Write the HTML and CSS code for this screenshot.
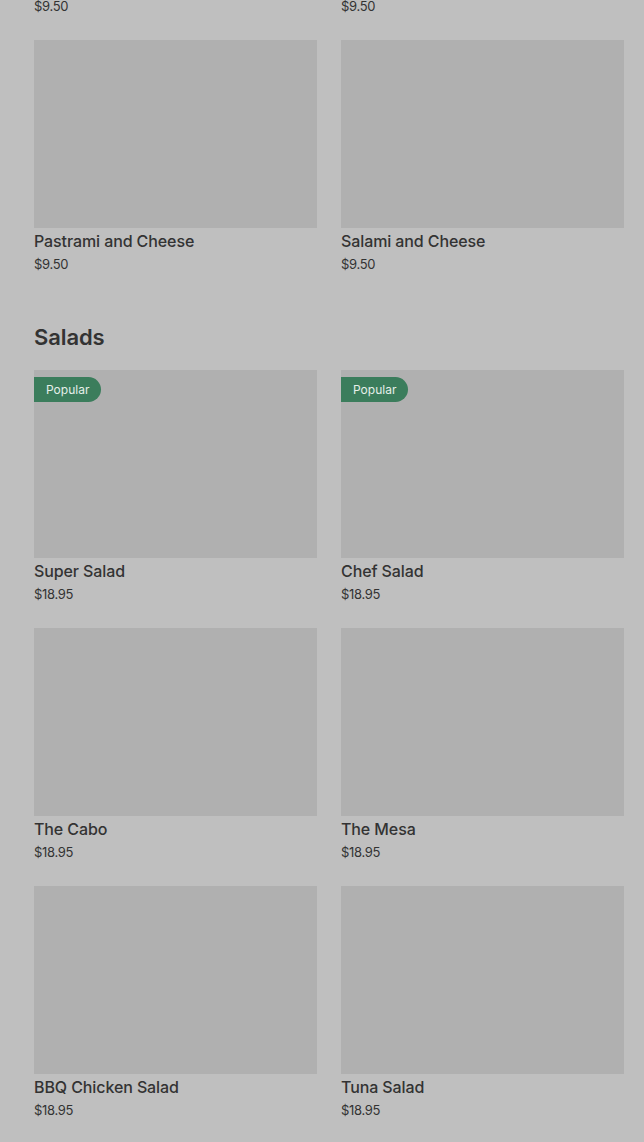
FILE: index.html
```html
<!DOCTYPE html>
<html lang="en">
<head>
  <meta charset="UTF-8" />
  <meta name="viewport" content="width=device-width, initial-scale=1.0"/>
  <title>Menu</title>
  <link rel="stylesheet" href="styles.css">
</head>
<body>
  <div class="menu">
    <!-- Sandwiches (tail of the section) -->
    <section class="section section-cut">
      <div class="grid">
        <div class="card">
          <div class="photo"></div>
          <div class="name">Ham and Cheese</div>
          <div class="price">$9.50</div>
        </div>
        <div class="card">
          <div class="photo"></div>
          <div class="name">Turkey and Cheese</div>
          <div class="price">$9.50</div>
        </div>
        <div class="card">
          <div class="photo"></div>
          <div class="name">Pastrami and Cheese</div>
          <div class="price">$9.50</div>
        </div>
        <div class="card">
          <div class="photo"></div>
          <div class="name">Salami and Cheese</div>
          <div class="price">$9.50</div>
        </div>
      </div>
    </section>

    <!-- Salads -->
    <section class="section">
      <h2 class="section-title">Salads</h2>
      <div class="grid">
        <div class="card">
          <div class="photo"><span class="badge">Popular</span></div>
          <div class="name">Super Salad</div>
          <div class="price">$18.95</div>
        </div>
        <div class="card">
          <div class="photo"><span class="badge">Popular</span></div>
          <div class="name">Chef Salad</div>
          <div class="price">$18.95</div>
        </div>
        <div class="card">
          <div class="photo"></div>
          <div class="name">The Cabo</div>
          <div class="price">$18.95</div>
        </div>
        <div class="card">
          <div class="photo"></div>
          <div class="name">The Mesa</div>
          <div class="price">$18.95</div>
        </div>
        <div class="card">
          <div class="photo"></div>
          <div class="name">BBQ Chicken Salad</div>
          <div class="price">$18.95</div>
        </div>
        <div class="card">
          <div class="photo"></div>
          <div class="name">Tuna Salad</div>
          <div class="price">$18.95</div>
        </div>
      </div>
    </section>
  </div>
</body>
</html>
```

FILE: styles.css
```css
:root {
  --bg: #bfbfbf;
  --photo: #b0b0b0;
  --text: #333333;
  --green: #3b7d5c;
}

body {
  margin: 0;
  padding: 0;
  background-color: var(--bg);
  color: var(--text);
  font-family: 'Inter', 'Liberation Sans', sans-serif;
}

.menu {
  padding: 0 20px 0 34px;
  margin-top: -218px;
}

.section-title {
  margin: 48px 0 19px;
  font-size: 22px;
  line-height: 28px;
  font-weight: 600;
  letter-spacing: -0.1px;
}

.grid {
  display: grid;
  grid-template-columns: 1fr 1fr;
  column-gap: 24px;
  row-gap: 23px;
}

.photo {
  position: relative;
  height: 188px;
  background-color: var(--photo);
}

.badge {
  position: absolute;
  top: 7px;
  left: 0;
  padding: 0 12px;
  height: 25px;
  line-height: 25px;
  font-size: 12px;
  color: #e6efe9;
  background-color: var(--green);
  border-radius: 0 13px 13px 0;
}

.name {
  padding-top: 1px;
  font-size: 16px;
  line-height: 24px;
  font-weight: 500;
  letter-spacing: -0.1px;
}

.price {
  font-size: 13px;
  line-height: 22px;
  letter-spacing: -0.3px;
}
```
